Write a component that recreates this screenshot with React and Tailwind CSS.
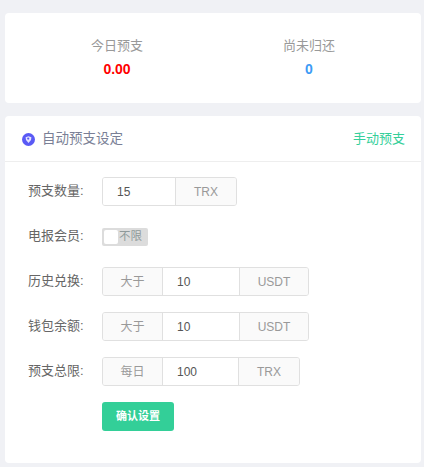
import React from 'react'

const Addon = ({ children, className = '' }) => (
  <div className={`flex items-center justify-center bg-[#fafafa] text-[#999] ${className}`}>{children}</div>
)

const Row = ({ label, children }) => (
  <div className="flex items-center h-[29px]">
    <label className="w-[74px] text-[13px] leading-[27px] self-start text-[#666]">{label}:</label>
    {children}
  </div>
)

const InputGroup = ({ prefix, value, unit, widths }) => (
  <div className="flex h-[29px] border border-[#e0e0e0] rounded-[3px] overflow-hidden" style={{ width: widths.total }}>
    {prefix && (
      <Addon className="border-r border-[#e0e0e0] shrink-0 w-[60px] text-[12px]">{prefix}</Addon>
    )}
    <div className="flex items-center pl-[14px] bg-white text-[#555] text-[12px]" style={{ width: widths.input }}>{value}</div>
    <Addon className="border-l border-[#e0e0e0] flex-1 text-[12px]">{unit}</Addon>
  </div>
)

const App = () => {
  return (
    <div className="w-[424px] h-[467px] overflow-hidden bg-[#f0f1f5] pt-[13px] pl-[5px] pr-[3px] font-['Liberation_Sans','Noto_Sans_CJK_SC',sans-serif]">
      <div className="flex h-[90px] bg-white rounded-[4px] pt-[24px] px-4">
        <div className="w-1/2 flex flex-col items-center">
          <div className="text-[13px] leading-[18px] text-[#999]">今日预支</div>
          <div className="text-[14px] leading-[18px] mt-[5px] font-bold text-[#ff0000]">0.00</div>
        </div>
        <div className="w-1/2 flex flex-col items-center">
          <div className="text-[13px] leading-[18px] text-[#999]">尚未归还</div>
          <div className="text-[14px] leading-[18px] mt-[5px] font-bold text-[#3d9bf5]">0</div>
        </div>
      </div>

      <div className="mt-[13px] h-[347px] bg-white rounded-[4px]">
        <div className="flex items-center justify-between h-[46px] pl-[17px] pr-[16px] border-b border-[#eeeeee]">
          <div className="flex items-center gap-[7px] pt-[2px]">
            <svg width="13" height="13" viewBox="0 0 13 13">
              <circle cx="6.5" cy="6.5" r="6.5" fill="#5a5af5" />
              <path d="M3.6 4.2 L6.5 3.2 L9.4 4.2 L9 7 L6.5 10 L4 7 Z" fill="#e4e4ff" />
              <circle cx="6.2" cy="5.6" r="1.1" fill="#5a5af5" />
            </svg>
            <span className="text-[13.5px] text-[#7a7f96]">自动预支设定</span>
          </div>
          <button className="text-[13px] text-[#35cf9a]">手动预支</button>
        </div>

        <div className="flex flex-col gap-4 pt-[15px] pl-[23px]">
          <Row label="预支数量">
            <InputGroup value="15" unit="TRX" widths={{ total: 135, input: 72 }} />
          </Row>
          <Row label="电报会员">
            <div className="flex items-center w-[46px] h-[18px] bg-[#dcdcdc] rounded-[2px] pl-[2px]">
              <div className="w-[14px] h-[14px] bg-white rounded-[2px]" />
              <span className="text-[11.5px] leading-none ml-[1px] text-[#8f9a9a]">不限</span>
            </div>
          </Row>
          <Row label="历史兑换">
            <InputGroup prefix="大于" value="10" unit="USDT" widths={{ total: 207, input: 76 }} />
          </Row>
          <Row label="钱包余额">
            <InputGroup prefix="大于" value="10" unit="USDT" widths={{ total: 207, input: 76 }} />
          </Row>
          <Row label="预支总限">
            <InputGroup prefix="每日" value="100" unit="TRX" widths={{ total: 198, input: 75 }} />
          </Row>
          <div className="pl-[74px]">
            <button className="w-[72px] h-[29px] bg-[#33cf98] rounded-[3px] text-[11px] font-bold text-white">确认设置</button>
          </div>
        </div>
      </div>
    </div>
  )
}

export default App
